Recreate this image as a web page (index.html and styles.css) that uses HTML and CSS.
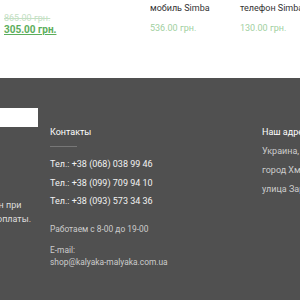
FILE: index.html
```html
<!DOCTYPE html>
<html lang="ru">
<head>
    <meta charset="UTF-8">
    <meta name="viewport" content="width=device-width, initial-scale=1.0">
    <title>Калякa-Малякa</title>
    <link rel="stylesheet" href="styles.css">
</head>
<body>

<div class="products">
    <div class="product product-first">
        <div class="old-price">865.00 грн.</div>
        <a class="new-price" href="#">305.00 грн.</a>
    </div>
    <div class="product">
        <div class="product-name">мобиль Simba</div>
        <div class="price">536.00 грн.</div>
    </div>
    <div class="product">
        <div class="product-name">телефон Simba</div>
        <div class="price">130.00 грн.</div>
    </div>
</div>

<footer class="footer">
    <div class="footer-col footer-subscribe">
        <div class="subscribe-box"></div>
        <p class="subscribe-text">Возможен при<br>условии оплаты.</p>
    </div>

    <div class="footer-col footer-contacts">
        <h3 class="footer-title">Контакты</h3>
        <div class="title-line"></div>
        <p class="phone">Тел.: +38 (068) 038 99 46</p>
        <p class="phone">Тел.: +38 (099) 709 94 10</p>
        <p class="phone">Тел.: +38 (093) 573 34 36</p>
        <p class="hours">Работаем с 8-00 до 19-00</p>
        <p class="mail">E-mail:<br>shop@kalyaka-malyaka.com.ua</p>
    </div>

    <div class="footer-col footer-address">
        <h3 class="footer-title">Наш адрес</h3>
        <p class="address-line">Украина,</p>
        <p class="address-line">город Хмельницкий,</p>
        <p class="address-line">улица Заречанская</p>
    </div>
</footer>

</body>
</html>
```
FILE: styles.css
```css
html, body {
    margin: 0;
    padding: 0;
    overflow: hidden;
}

body {
    font-family: Roboto, "Noto Sans", sans-serif;
    background-color: #fff;
    width: 300px;
    height: 300px;
}

/* products strip */
.products {
    display: flex;
    height: 78px;
    padding-top: 2px;
    box-sizing: border-box;
}

.product {
    font-size: 9px;
    white-space: nowrap;
    flex-shrink: 0;
}

.product-first {
    width: 150px;
    padding-left: 4px;
    padding-top: 10px;
    box-sizing: border-box;
}

.product:nth-child(2) {
    width: 90px;
}

.old-price {
    color: #c4e0c4;
    text-decoration: line-through;
    line-height: 12px;
}

.new-price {
    color: #5cae5c;
    font-weight: bold;
    text-decoration: underline;
    line-height: 12px;
    display: block;
    font-size: 10px;
}

.product-name {
    color: #333;
    line-height: 12px;
}

.price {
    color: #9fd09f;
    margin-top: 8px;
    line-height: 12px;
}

/* footer */
.footer {
    background-color: #505050;
    color: #eee;
    height: 222px;
    display: flex;
    font-size: 9px;
    padding-top: 25px;
    box-sizing: border-box;
    white-space: nowrap;
}

.footer-col p {
    margin: 0;
}

.footer-subscribe {
    width: 150px;
    margin-left: -112px;
    flex-shrink: 0;
}

.subscribe-box {
    background: #fff;
    height: 19px;
    margin-top: 5px;
}

.subscribe-text {
    margin-top: 71px !important;
    margin-left: 72px !important;
    line-height: 14px;
    color: #ddd;
}

.footer-contacts {
    margin-left: 12px;
    width: 212px;
    flex-shrink: 0;
    padding-top: 23px;
}

.footer-title {
    font-size: 9px;
    font-weight: normal;
    margin: 0;
    line-height: 12px;
    color: #fff;
}

.title-line {
    width: 27px;
    height: 1px;
    background: #777;
    margin: 8px 0 8px;
}

.phone {
    line-height: 18.5px;
    color: #f2f2f2;
}

.hours {
    margin-top: 11px !important;
    line-height: 14px;
    color: #ccc;
    font-size: 8.4px;
}

.mail {
    margin-top: 8px !important;
    line-height: 12px;
    color: #ccc;
    font-size: 8.4px;
}

.footer-address {
    flex-shrink: 0;
    width: 120px;
    padding-top: 23px;
}

.address-line {
    line-height: 19px;
    color: #ccc;
}

.footer-address .footer-title {
    margin-bottom: 4px;
}
```
